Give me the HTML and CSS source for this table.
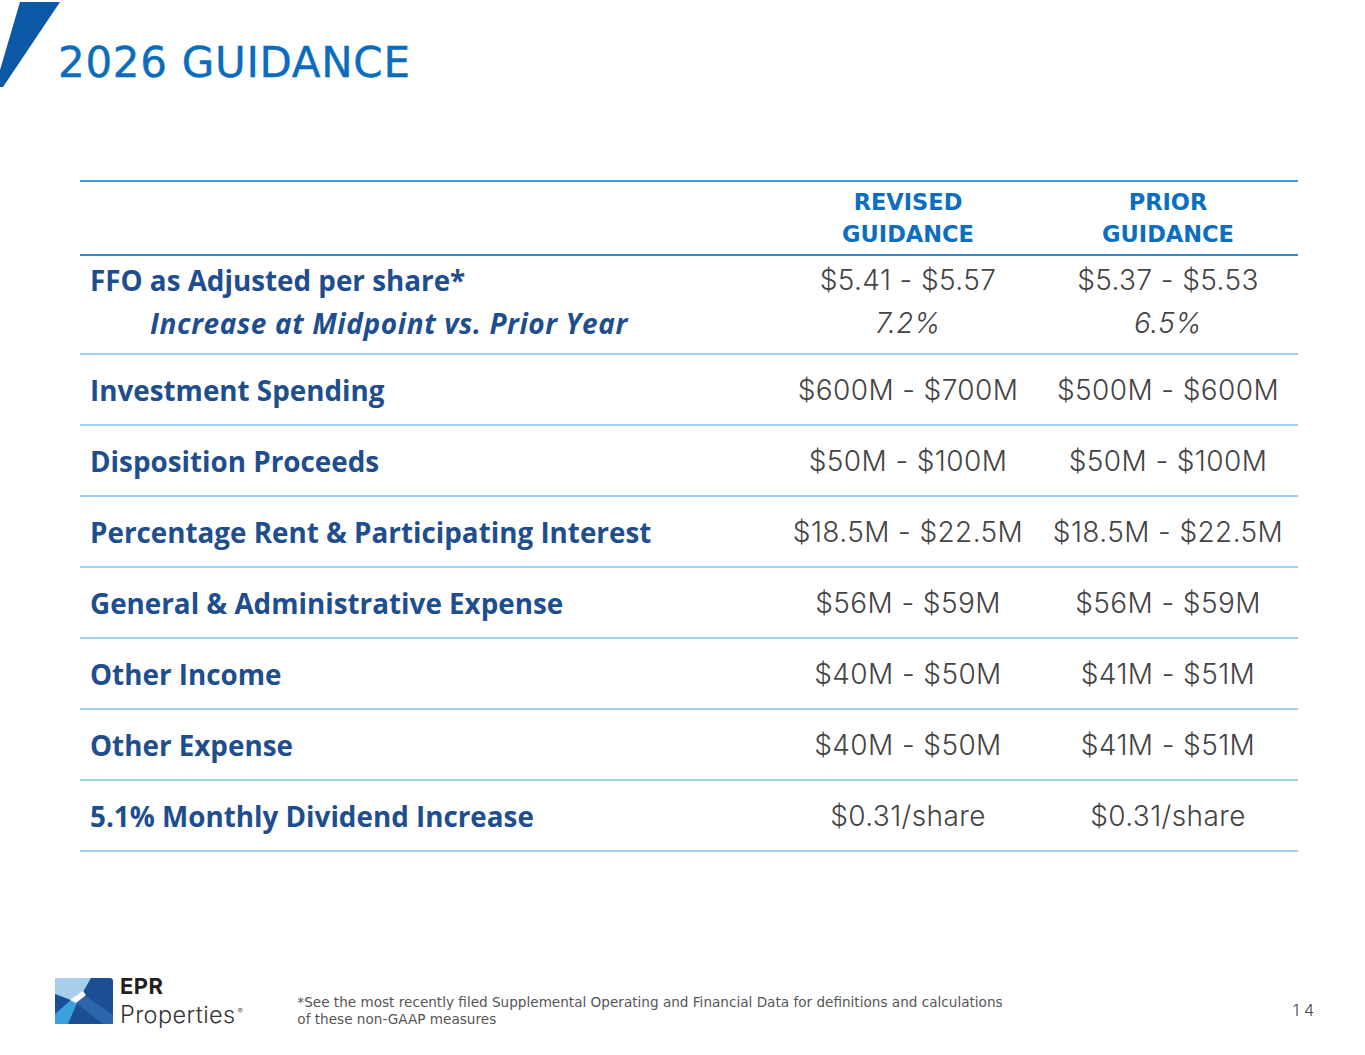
FILE: index.html
```html
<!DOCTYPE html>
<html lang="en">
<head>
<meta charset="utf-8">
<title>2026 Guidance</title>
<link rel="stylesheet" href="styles.css">
</head>
<body>
<div class="page">
  <header class="top">
    <svg class="slash" width="60" height="88" viewBox="0 0 60 88" aria-hidden="true">
      <polygon points="20,2 60,2 3,87 0,87 0,70" fill="#0b59a6"/>
    </svg>
    <h1 class="title">2026 GUIDANCE</h1>
  </header>

  <section class="guidance">
    <div class="row head">
      <div class="cell label"></div>
      <div class="cell hval">REVISED<br>GUIDANCE</div>
      <div class="cell hval">PRIOR<br>GUIDANCE</div>
    </div>
    <div class="row ffo">
      <div class="cell label">FFO as Adjusted per share*</div>
      <div class="cell val">$5.41 - $5.57</div>
      <div class="cell val">$5.37 - $5.53</div>
      <div class="cell label sub">Increase at Midpoint vs. Prior Year</div>
      <div class="cell val ital">7.2%</div>
      <div class="cell val ital">6.5%</div>
    </div>
    <div class="row">
      <div class="cell label">Investment Spending</div>
      <div class="cell val">$600M - $700M</div>
      <div class="cell val">$500M - $600M</div>
    </div>
    <div class="row">
      <div class="cell label">Disposition Proceeds</div>
      <div class="cell val">$50M - $100M</div>
      <div class="cell val">$50M - $100M</div>
    </div>
    <div class="row">
      <div class="cell label">Percentage Rent &amp; Participating Interest</div>
      <div class="cell val">$18.5M - $22.5M</div>
      <div class="cell val">$18.5M - $22.5M</div>
    </div>
    <div class="row">
      <div class="cell label">General &amp; Administrative Expense</div>
      <div class="cell val">$56M - $59M</div>
      <div class="cell val">$56M - $59M</div>
    </div>
    <div class="row">
      <div class="cell label">Other Income</div>
      <div class="cell val">$40M - $50M</div>
      <div class="cell val">$41M - $51M</div>
    </div>
    <div class="row">
      <div class="cell label">Other Expense</div>
      <div class="cell val">$40M - $50M</div>
      <div class="cell val">$41M - $51M</div>
    </div>
    <div class="row">
      <div class="cell label">5.1% Monthly Dividend Increase</div>
      <div class="cell val">$0.31/share</div>
      <div class="cell val">$0.31/share</div>
    </div>
  </section>

  <footer class="foot">
    <div class="logo">
      <svg class="logo-mark" width="58" height="46" viewBox="0 0 58 46" aria-hidden="true">
        <rect x="0" y="0" width="58" height="46" rx="3" fill="#1c4e93"/>
        <polygon points="0,0 36,0 28,14 16,22 0,16" fill="#a7cfec"/>
        <polygon points="16,22 22,25 13,46 0,46 0,36" fill="#3aa1de"/>
        <polygon points="29,17 58,37 58,46 48,46 21,25" fill="#2b66ab"/>
        <polygon points="28,13 31,17 21,25 15,22" fill="#ffffff"/>
      </svg>
      <div class="logo-text">
        <span class="epr">EPR</span>
        <span class="props">Properties<sup>®</sup></span>
      </div>
    </div>
    <p class="note">*See the most recently filed Supplemental Operating and Financial Data for definitions and calculations<br>of these non-GAAP measures</p>
    <span class="pnum">14</span>
  </footer>
</div>
</body>
</html>
```
FILE: styles.css
```css
html, body {
  margin: 0;
  padding: 0;
  background: #ffffff;
}

.page {
  width: 1365px;
  height: 1055px;
  display: flex;
  flex-direction: column;
  overflow: hidden;
}

/* ---------- header ---------- */
.top {
  display: flex;
  align-items: flex-start;
  height: 88px;
}

.slash {
  display: block;
  flex: none;
}

.title {
  margin: 42px 0 0 -2px;
  font-family: "DejaVu Sans", sans-serif;
  font-weight: normal;
  font-size: 42px;
  line-height: 42px;
  color: #0b6cbe;
  letter-spacing: 0.7px;
  -webkit-text-stroke: 0.4px #0b6cbe;
}

/* ---------- guidance table ---------- */
.guidance {
  width: 1218px;
  margin: 92px 0 0 80px;
  border-top: 2px solid #3b9de0;
}

.row {
  display: grid;
  grid-template-columns: 1fr 260px 260px;
  align-items: center;
  height: 69px;
  border-bottom: 2px solid #9fd0f0;
}

.row.head {
  height: 72px;
  border-bottom-color: #2d88d4;
}

.row.ffo {
  height: 97px;
  grid-template-rows: 48px 38px;
  align-content: start;
}

.cell {
  font-size: 28px;
}

.label {
  padding-left: 10px;
  font-family: "Open Sans", sans-serif;
  font-weight: 700;
  font-size: 27.8px;
  line-height: 40px;
  color: #1f4e8e;
  white-space: nowrap;
}

.label.sub {
  padding-left: 70px;
  font-style: italic;
  font-size: 28px;
  letter-spacing: 0.6px;
}

.val {
  text-align: center;
  font-family: "Inter", sans-serif;
  font-weight: 300;
  font-size: 28px;
  line-height: 40px;
  letter-spacing: 0.4px;
  color: #444444;
  white-space: nowrap;
}

.val.ital {
  font-style: italic;
}

.hval {
  text-align: center;
  font-family: "DejaVu Sans", sans-serif;
  font-weight: 700;
  font-size: 22.5px;
  line-height: 32px;
  color: #0b6ec1;
}

/* ---------- footer ---------- */
.foot {
  margin-top: auto;
  display: flex;
  align-items: flex-end;
  padding: 0 0 31px 55px;
  height: 46px;
}

.logo {
  display: flex;
  align-items: center;
  gap: 7px;
  flex: none;
  height: 46px;
}

.logo-mark {
  display: block;
}

.logo-text {
  display: flex;
  flex-direction: column;
  font-family: "Inter", sans-serif;
  color: #231f20;
}

.epr {
  font-weight: 700;
  font-size: 22px;
  line-height: 27px;
  letter-spacing: 0.4px;
}

.props {
  font-weight: 300;
  font-size: 23.5px;
  line-height: 29px;
  letter-spacing: 0.4px;
  color: #333333;
}

.props sup {
  font-size: 8px;
  line-height: 0;
  vertical-align: 9px;
  margin-left: 2px;
}

.note {
  margin: 0 0 -4px 54px;
  font-family: "DejaVu Sans", sans-serif;
  font-size: 13.6px;
  line-height: 17px;
  color: #555555;
}

.pnum {
  margin: 0 46px 4px auto;
  font-family: "Inter", sans-serif;
  font-weight: 300;
  font-size: 16px;
  line-height: 20px;
  letter-spacing: 5px;
  color: #444444;
}
```
